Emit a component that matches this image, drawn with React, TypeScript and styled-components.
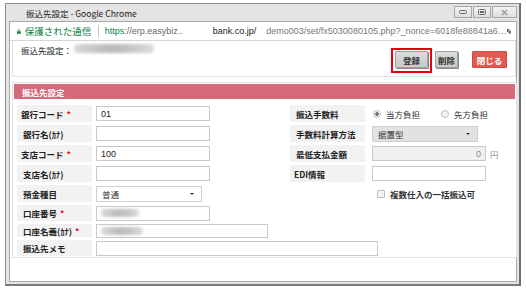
import React from "react";
import styled, { createGlobalStyle } from "styled-components";

const Global = createGlobalStyle`
  html, body { margin: 0; padding: 0; background: #ffffff; }
  body { font-family: "Noto Sans CJK JP", "Liberation Sans", sans-serif; }
  * { box-sizing: border-box; }
`;

const Page = styled.div`
  width: 526px;
  height: 292px;
  padding: 3px 5px 0 5px;
`;

const Win = styled.div`
  width: 516px;
  height: 283px;
  background: #e4e4e4;
  border: 1px solid #8c8c8c;
  border-right: 2px solid #6e6e6e;
  border-bottom: 2px solid #7a7a7a;
  display: flex;
  flex-direction: column;
  padding: 0 2px 2px 3px;
`;

const TitleBar = styled.div`
  height: 17px;
  display: flex;
  align-items: center;
  justify-content: space-between;
  padding-left: 17px;
  font-size: 8.5px;
  color: #222;
`;

const Controls = styled.div`
  display: flex;
  align-self: flex-start;
  margin-top: 2px;
  gap: 1px;
`;

const Ctl = styled.div<{ $w: number }>`
  width: ${(p) => p.$w}px;
  height: 12px;
  border: 1px solid #a7a7a7;
  background: linear-gradient(#f4f4f4, #dedede);
  display: flex;
  align-items: center;
  justify-content: center;
`;

const Client = styled.div`
  flex: 1;
  display: flex;
  flex-direction: column;
  border: 1px solid #a9a9a9;
  background: #fff;
`;

const AddressBar = styled.div`
  height: 19px;
  display: flex;
  align-items: center;
  padding: 0 5px 0 7px;
  border-bottom: 1px solid #d6d6d6;
  font-size: 9px;
  white-space: nowrap;
  font-family: "Liberation Sans", "Noto Sans CJK JP", sans-serif;
`;

const Secure = styled.span`
  color: #0b8043;
  font-family: "Noto Sans CJK JP", sans-serif;
  font-size: 9.5px;
  margin-left: 4px;
`;

const Sep = styled.span`
  width: 1px;
  height: 12px;
  background: #c8c8c8;
  margin: 0 6px 0 7px;
`;

const UrlPart = styled.span<{ $c: string; $ml?: number }>`
  color: ${(p) => p.$c};
  margin-left: ${(p) => p.$ml ?? 0}px;
`;

const Body = styled.div`
  flex: 1;
  padding: 0 0 0 2px;
  display: flex;
  flex-direction: column;
  gap: 5px;
`;

const HeadPanel = styled.div`
  height: 36px;
  border: 1px solid #e2e2e2;
  border-top: none;
  display: flex;
  justify-content: space-between;
  padding: 3px 8px 0 8px;
`;

const HeadLabel = styled.div`
  display: flex;
  align-items: flex-start;
  font-size: 8.5px;
  color: #222;
  gap: 2px;
`;

const Blur = styled.span<{ $w: number; $h?: number }>`
  display: inline-block;
  width: ${(p) => p.$w}px;
  height: ${(p) => p.$h ?? 8}px;
  border-radius: 4px;
  background: linear-gradient(90deg, #d8d8d8, #b9b9b9 45%, #c4c4c4 70%, #dcdcdc);
  filter: blur(1.5px);
`;

const Btns = styled.div`
  display: flex;
  align-items: flex-start;
  padding-top: 4px;
`;

const Mark = styled.div`
  border: 2.5px solid #e8000b;
  padding: 1px 2px 3px 2px;
  margin-right: 3px;
`;

const Btn = styled.button<{ $red?: boolean; $w: number; $mt?: number; $mr?: number }>`
  width: ${(p) => p.$w}px;
  height: 17px;
  padding: 0;
  margin-top: ${(p) => p.$mt ?? 0}px;
  margin-right: ${(p) => p.$mr ?? 0}px;
  font-family: "Noto Sans CJK JP", sans-serif;
  font-size: 8.5px;
  font-weight: 700;
  border-radius: 1px;
  color: ${(p) => (p.$red ? "#fff" : "#333")};
  background: ${(p) => (p.$red ? "#e25a52" : "linear-gradient(#dcdcdc, #c9c9c9)")};
  border: 1px solid ${(p) => (p.$red ? "#d04a44" : "#a0a0a0")};
  box-shadow: ${(p) => (p.$red ? "none" : "1px 1px 0 #8a8a8a")};
  display: flex;
  align-items: center;
  justify-content: center;
`;

const Panel = styled.div`
  width: 505px;
  height: 176px;
  border: 1px solid #e2e2e2;
  padding: 1px;
`;

const PanelHead = styled.div`
  height: 15px;
  background: #d56b7a;
  color: #fff;
  font-size: 8.5px;
  font-weight: 700;
  display: flex;
  align-items: center;
  padding-left: 8px;
`;

const Grid = styled.div`
  display: grid;
  grid-template-columns: 75px 198px 75px 1fr;
  grid-template-rows: 17px 17px 17px 17px 17px 16px 13px 16px;
  row-gap: 3px;
  padding: 6px 0 0 3px;
  font-size: 8.5px;
`;

const Label = styled.div<{ $indent?: number }>`
  background: #f2f2f2;
  font-weight: 700;
  color: #222;
  display: flex;
  align-items: center;
  padding-left: ${(p) => p.$indent ?? 6}px;
  white-space: nowrap;
`;

const Req = styled.span`
  color: #e8000b;
  margin-left: 3px;
`;

const Cell = styled.div<{ $pl?: number; $span?: number }>`
  display: flex;
  align-items: center;
  padding-left: ${(p) => p.$pl ?? 4}px;
  grid-column: span ${(p) => p.$span ?? 1};
  gap: 4px;
`;

const Input = styled.div<{ $w: number; $h?: number; $disabled?: boolean; $right?: boolean }>`
  width: ${(p) => p.$w}px;
  height: ${(p) => p.$h ?? 15}px;
  border: 1px solid #c9c9c9;
  background: ${(p) => (p.$disabled ? "#f0f0f0" : "#fff")};
  display: flex;
  align-items: center;
  justify-content: ${(p) => (p.$right ? "flex-end" : "flex-start")};
  padding: 0 4px;
  font-size: 9px;
  color: ${(p) => (p.$disabled ? "#888" : "#222")};
  font-family: "Liberation Sans", "Noto Sans CJK JP", sans-serif;
`;

const Select = styled.div<{ $w: number; $grey?: boolean }>`
  width: ${(p) => p.$w}px;
  height: 16px;
  border: 1px solid ${(p) => (p.$grey ? "#d0d0d0" : "#cfcfcf")};
  background: ${(p) => (p.$grey ? "#e2e2e2" : "#fff")};
  display: flex;
  align-items: center;
  justify-content: space-between;
  padding: 0 7px 0 5px;
  font-size: 8.5px;
  color: #333;
`;

const Caret = styled.span`
  width: 0;
  height: 0;
  border-left: 2px solid transparent;
  border-right: 2px solid transparent;
  border-top: 2.5px solid #333;
`;

const Radio = styled.span<{ $on?: boolean }>`
  width: 8px;
  height: 8px;
  border-radius: 50%;
  border: 1px solid #bdbdbd;
  background: ${(p) => (p.$on ? "radial-gradient(circle, #777 0 1.6px, #f3f3f3 2px)" : "#f3f3f3")};
  display: inline-block;
`;

const Opt = styled.span<{ $ml?: number }>`
  display: inline-flex;
  align-items: center;
  gap: 5px;
  color: #333;
  margin-left: ${(p) => p.$ml ?? 0}px;
`;

const Check = styled.span`
  width: 8px;
  height: 8px;
  border: 1px solid #bdbdbd;
  border-radius: 1px;
  background: #f3f3f3;
  display: inline-block;
`;

const Unit = styled.span`
  color: #999;
  font-size: 8.5px;
`;

const Bold = styled.span`
  font-weight: 700;
  color: #333;
`;

export default function App() {
  return (
    <>
      <Global />
      <Page>
        <Win>
          <TitleBar>
            <span>振込先設定 - Google Chrome</span>
            <Controls>
              <Ctl $w={18}>
                <svg width="8" height="4" viewBox="0 0 8 4">
                  <rect x="0.5" y="0.5" width="7" height="3" rx="1" fill="none" stroke="#666" />
                </svg>
              </Ctl>
              <Ctl $w={18}>
                <svg width="8" height="6" viewBox="0 0 8 6">
                  <rect x="0.5" y="0.5" width="7" height="5" rx="1" fill="none" stroke="#666" />
                  <rect x="2" y="2" width="4" height="2" fill="#666" />
                </svg>
              </Ctl>
              <Ctl $w={25}>
                <svg width="7" height="7" viewBox="0 0 7 7">
                  <path d="M1 1 L6 6 M6 1 L1 6" stroke="#999" strokeWidth="1.4" />
                </svg>
              </Ctl>
            </Controls>
          </TitleBar>
          <Client>
            <AddressBar>
              <svg width="7" height="9" viewBox="0 0 7 9">
                <path d="M1.6 4 V2.6 a1.9 1.9 0 0 1 3.8 0 V4" fill="none" stroke="#0b8043" strokeWidth="1.2" />
                <rect x="0" y="4" width="7" height="5" rx="0.5" fill="#0b8043" />
              </svg>
              <Secure>保護された通信</Secure>
              <Sep />
              <UrlPart $c="#0b8043">https</UrlPart>
              <UrlPart $c="#666">://erp.easybiz..</UrlPart>
              <UrlPart $c="#222" $ml={30}>bank.co.jp/</UrlPart>
              <UrlPart $c="#777" $ml={10}>demo003/set/fx5030080105.php?_nonce=6018fe88841a6…</UrlPart>
              <span style={{ flex: 1 }} />
              <svg width="8" height="9" viewBox="0 0 8 9">
                <rect x="0" y="0" width="5" height="6" fill="#555" />
                <rect x="3" y="3" width="5" height="6" fill="#777" stroke="#fff" strokeWidth="0.6" />
              </svg>
            </AddressBar>
            <Body>
              <HeadPanel>
                <HeadLabel>
                  <span>振込先設定：</span>
                  <Blur $w={80} $h={9} />
                </HeadLabel>
                <Btns>
                  <Mark>
                    <Btn $w={33}>登録</Btn>
                  </Mark>
                  <Btn $w={23} $mt={3} $mr={14}>削除</Btn>
                  <Btn $w={35} $mt={3} $red>閉じる</Btn>
                </Btns>
              </HeadPanel>
              <Panel>
                <PanelHead>振込先設定</PanelHead>
                <Grid>
                  <Label $indent={4}>銀行コード<Req>*</Req></Label>
                  <Cell><Input $w={114}>01</Input></Cell>
                  <Label>振込手数料</Label>
                  <Cell $pl={8}>
                    <Opt><Radio $on />当方負担</Opt>
                    <Opt $ml={17}><Radio />先方負担</Opt>
                  </Cell>

                  <Label>銀行名(ｶﾅ)</Label>
                  <Cell><Input $w={114} /></Cell>
                  <Label>手数料計算方法</Label>
                  <Cell $pl={7}><Select $w={106} $grey>据置型<Caret /></Select></Cell>

                  <Label $indent={4}>支店コード<Req>*</Req></Label>
                  <Cell><Input $w={114}>100</Input></Cell>
                  <Label>最低支払金額</Label>
                  <Cell $pl={7}><Input $w={114} $disabled $right>0</Input><Unit>円</Unit></Cell>

                  <Label>支店名(ｶﾅ)</Label>
                  <Cell><Input $w={114} /></Cell>
                  <Label $indent={4}>EDI情報</Label>
                  <Cell $pl={7}><Input $w={114} /></Cell>

                  <Label>預金種目</Label>
                  <Cell><Select $w={106}>普通<Caret /></Select></Cell>
                  <Cell />
                  <Cell $pl={12}><Opt><Check /><Bold>複数仕入の一括振込可</Bold></Opt></Cell>

                  <Label>口座番号<Req>*</Req></Label>
                  <Cell $span={3}><Input $w={114}><Blur $w={38} $h={8} /></Input></Cell>

                  <Label>口座名義(ｶﾅ)<Req>*</Req></Label>
                  <Cell $span={3}><Input $w={172} $h={14}><Blur $w={42} $h={8} /></Input></Cell>

                  <Label>振込先メモ</Label>
                  <Cell $span={3}><Input $w={282} /></Cell>
                </Grid>
              </Panel>
            </Body>
          </Client>
        </Win>
      </Page>
    </>
  );
}
